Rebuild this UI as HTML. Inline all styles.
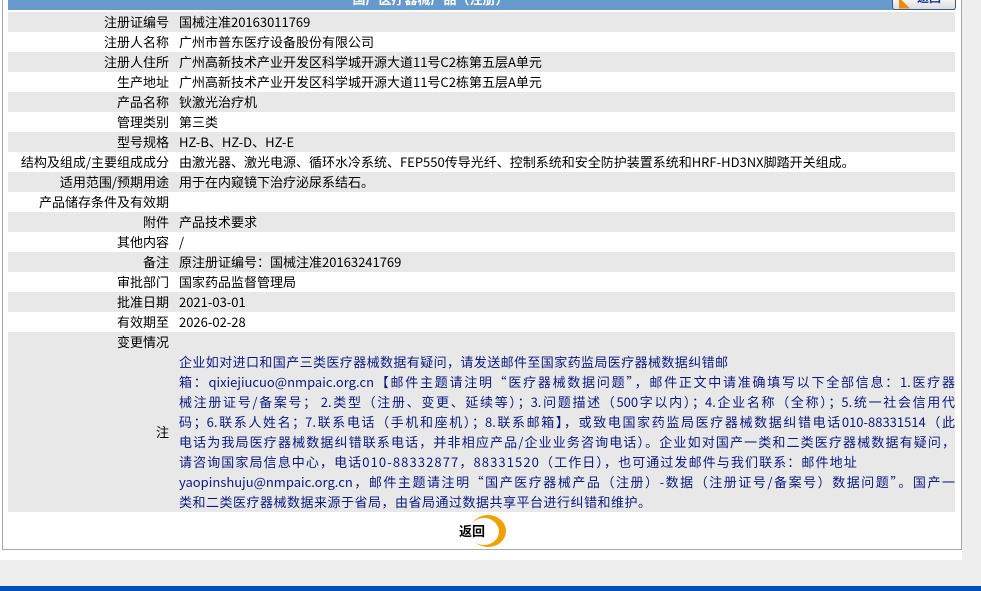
<!DOCTYPE html>
<html><head><meta charset="utf-8"><style>
body{margin:0;width:981px;height:591px;background:#eeeeee;position:relative;overflow:hidden;font-family:"Noto Sans CJK SC","Liberation Sans",sans-serif;font-size:13px;color:#000}
#white{position:absolute;left:0;top:0;width:962px;height:560px;background:#fff}
#box{position:absolute;left:2px;top:-2px;width:958px;height:551px;border:1px solid #a8a8a8;border-top:none;background:#fff}
#bar{position:absolute;left:8px;top:0;width:947px;height:10px;background:#6699cc;overflow:hidden}
#bar span{position:absolute;left:0;width:845px;text-align:center;top:-11px;color:#fff;font-weight:bold;font-size:13px}
#btn{position:absolute;left:892px;top:-6px;width:62px;height:14px;border:1px solid #3a5a8a;border-radius:3px;background:linear-gradient(#fff,#ddd);overflow:hidden}
table{position:absolute;left:8px;top:12px;width:947px;border-collapse:collapse}
td{height:20px;padding:0;line-height:20px;white-space:nowrap}
td.l{width:161px;text-align:right}
td.v{padding-left:10px}
tr.g td{background:#e8e8e8}
.note{color:#0a1a80;line-height:20px;padding:0 0 0 10px;height:160px}
.note div{height:20px}
.note .j{text-align:justify;text-align-last:justify;width:776px;text-justify:inter-character}
#blue{position:absolute;left:0;top:586px;width:981px;height:5px;background:#0050b8}
</style></head><body>
<div id="white"></div>
<div id="box"></div>
<div id="bar"><span>国产医疗器械产品（注册）</span></div>
<div id="btn"><span style="position:absolute;left:6px;top:0px;color:#f08a00;font-size:11px">◣</span><span style="position:absolute;left:24px;top:-6px;color:#1a3a9a;font-weight:bold;font-size:12px">返回</span></div>
<table>
<tr class="g"><td class="l">注册证编号</td><td class="v">国械注准20163011769</td></tr>
<tr><td class="l">注册人名称</td><td class="v">广州市普东医疗设备股份有限公司</td></tr>
<tr class="g"><td class="l">注册人住所</td><td class="v">广州高新技术产业开发区科学城开源大道11号C2栋第五层A单元</td></tr>
<tr><td class="l">生产地址</td><td class="v">广州高新技术产业开发区科学城开源大道11号C2栋第五层A单元</td></tr>
<tr class="g"><td class="l">产品名称</td><td class="v">钬激光治疗机</td></tr>
<tr><td class="l">管理类别</td><td class="v">第三类</td></tr>
<tr class="g"><td class="l">型号规格</td><td class="v">HZ-B、HZ-D、HZ-E</td></tr>
<tr><td class="l">结构及组成/主要组成成分</td><td class="v">由激光器、激光电源、循环水冷系统、FEP550传导光纤、控制系统和安全防护装置系统和HRF-HD3NX脚踏开关组成。</td></tr>
<tr class="g"><td class="l">适用范围/预期用途</td><td class="v">用于在内窥镜下治疗泌尿系结石。</td></tr>
<tr><td class="l">产品储存条件及有效期</td><td class="v"></td></tr>
<tr class="g"><td class="l">附件</td><td class="v">产品技术要求</td></tr>
<tr><td class="l">其他内容</td><td class="v">/</td></tr>
<tr class="g"><td class="l">备注</td><td class="v">原注册证编号：国械注准20163241769</td></tr>
<tr><td class="l">审批部门</td><td class="v">国家药品监督管理局</td></tr>
<tr class="g"><td class="l">批准日期</td><td class="v">2021-03-01</td></tr>
<tr><td class="l">有效期至</td><td class="v">2026-02-28</td></tr>
<tr class="g"><td class="l">变更情况</td><td class="v"></td></tr>
<tr class="g"><td class="l">注</td><td class="note"><div style="letter-spacing:0.4px">企业如对进口和国产三类医疗器械数据有疑问，请发送邮件至国家药监局医疗器械数据纠错邮</div><div class="j">箱：qixiejiucuo@nmpaic.org.cn【邮件主题请注明“医疗器械数据问题”，邮件正文中请准确填写以下全部信息：1.医疗器</div><div class="j">械注册证号/备案号； 2.类型（注册、变更、延续等）；3.问题描述（500字以内）；4.企业名称（全称）；5.统一社会信用代</div><div class="j">码；6.联系人姓名；7.联系电话（手机和座机）；8.联系邮箱】，或致电国家药监局医疗器械数据纠错电话010-88331514（此</div><div class="j">电话为我局医疗器械数据纠错联系电话，并非相应产品/企业业务咨询电话）。企业如对国产一类和二类医疗器械数据有疑问，</div><div style="letter-spacing:1.1px">请咨询国家局信息中心，电话010-88332877，88331520（工作日），也可通过发邮件与我们联系：邮件地址</div><div class="j">yaopinshuju@nmpaic.org.cn，邮件主题请注明“国产医疗器械产品（注册）-数据（注册证号/备案号）数据问题”。国产一</div><div style="letter-spacing:0.5px">类和二类医疗器械数据来源于省局，由省局通过数据共享平台进行纠错和维护。</div></td></tr>
</table>
<div style="position:absolute;left:470px;top:515px;width:36px;height:32px;border-radius:50%;background:#f0a000"></div>
<div style="position:absolute;left:469px;top:518px;width:30px;height:27px;border-radius:50%;background:#fff"></div>
<div style="position:absolute;left:459px;top:521px;font-weight:bold;font-size:13px;line-height:20px">返回</div>
<div id="blue"></div>
</body></html>
